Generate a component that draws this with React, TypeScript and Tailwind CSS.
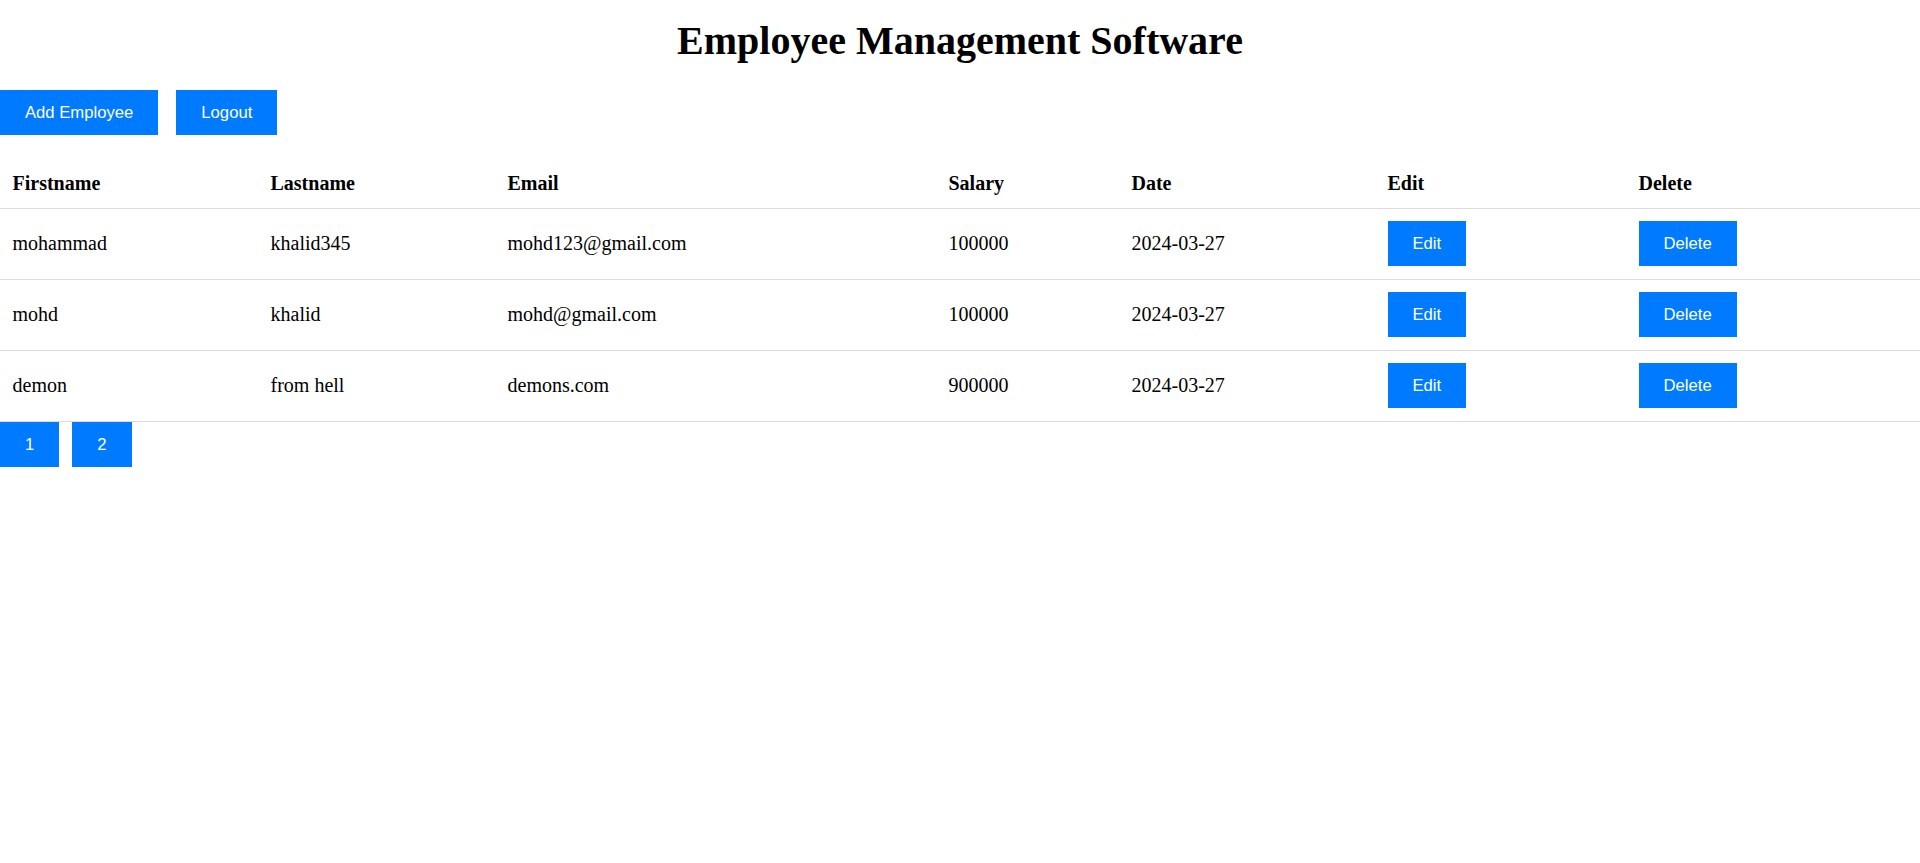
import React from "react";

const rows = [
  { first: "mohammad", last: "khalid345", email: "mohd123@gmail.com", salary: "100000", date: "2024-03-27" },
  { first: "mohd", last: "khalid", email: "mohd@gmail.com", salary: "100000", date: "2024-03-27" },
  { first: "demon", last: "from hell", email: "demons.com", salary: "900000", date: "2024-03-27" },
];

function Btn({ children, className = "" }: { children: React.ReactNode; className?: string }) {
  return (
    <button
      className={
        "h-[45px] px-[25px] bg-[#007bff] text-white text-[16.67px] leading-[19px] flex items-center justify-center border-0 " +
        className
      }
      style={{ fontFamily: '"Liberation Sans", Arial, sans-serif' }}
    >
      {children}
    </button>
  );
}

export default function App() {
  const headers = ["Firstname", "Lastname", "Email", "Salary", "Date", "Edit", "Delete"];
  return (
    <div
      className="min-h-screen bg-white text-black"
      style={{ fontFamily: '"Liberation Serif", "Times New Roman", serif' }}
    >
      <h1 className="pt-[18px] mb-[26px] text-center text-[40px] leading-[46px] font-bold">
        Employee Management Software
      </h1>
      <div className="flex gap-[18px]">
        <Btn>Add Employee</Btn>
        <Btn>Logout</Btn>
      </div>
      <table className="mt-[25px] w-full table-fixed border-collapse text-[20px] leading-[23px]">
        <colgroup>
          <col className="w-[258px]" />
          <col className="w-[237px]" />
          <col className="w-[441px]" />
          <col className="w-[183px]" />
          <col className="w-[256px]" />
          <col className="w-[251px]" />
          <col />
        </colgroup>
        <thead>
          <tr>
            {headers.map((h) => (
              <th
                key={h}
                className="text-left font-bold pl-[12.5px] pt-[12px] pb-[13px] border-b border-[#dddddd]"
              >
                {h}
              </th>
            ))}
          </tr>
        </thead>
        <tbody>
          {rows.map((r, i) => (
            <tr key={i}>
              <td className="pl-[12.5px] pt-[12px] pb-[13px] border-b border-[#dddddd] align-middle">{r.first}</td>
              <td className="pl-[12.5px] pt-[12px] pb-[13px] border-b border-[#dddddd] align-middle">{r.last}</td>
              <td className="pl-[12.5px] pt-[12px] pb-[13px] border-b border-[#dddddd] align-middle">{r.email}</td>
              <td className="pl-[12.5px] pt-[12px] pb-[13px] border-b border-[#dddddd] align-middle">{r.salary}</td>
              <td className="pl-[12.5px] pt-[12px] pb-[13px] border-b border-[#dddddd] align-middle">{r.date}</td>
              <td className="pl-[12.5px] pt-[12px] pb-[13px] border-b border-[#dddddd] align-middle">
                <Btn>Edit</Btn>
              </td>
              <td className="pl-[12.5px] pt-[12px] pb-[13px] border-b border-[#dddddd] align-middle">
                <Btn>Delete</Btn>
              </td>
            </tr>
          ))}
        </tbody>
      </table>
      <div className="flex gap-[13px]">
        <Btn>1</Btn>
        <Btn>2</Btn>
      </div>
    </div>
  );
}
